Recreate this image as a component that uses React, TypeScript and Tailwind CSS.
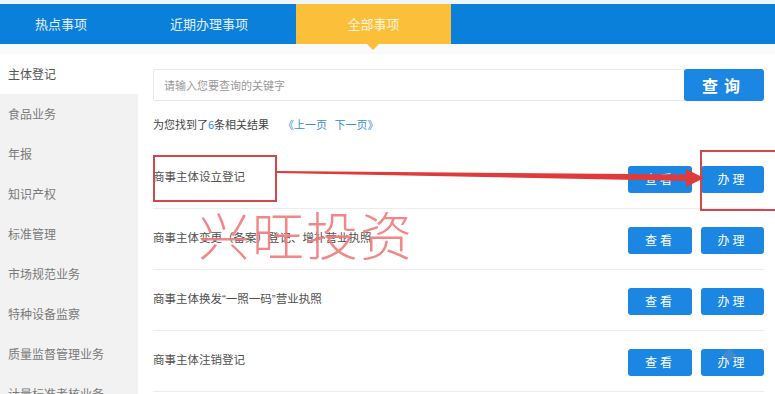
import React from "react";

const sideItems = [
  "主体登记",
  "食品业务",
  "年报",
  "知识产权",
  "标准管理",
  "市场规范业务",
  "特种设备监察",
  "质量监督管理业务",
  "计量标准考核业务",
];

const rows = [
  "商事主体设立登记",
  "商事主体变更（备案）登记、增补营业执照",
  "商事主体换发\u201c一照一码\u201d营业执照",
  "商事主体注销登记",
];

export default function App() {
  return (
    <div
      className="relative w-[775px] h-[394px] overflow-hidden bg-white"
      style={{ fontFamily: '"Noto Sans CJK SC", "Noto Sans", sans-serif' }}
    >
      <div className="h-[4px] bg-[#eef6fb]" />
      {/* Header tabs */}
      <div className="relative flex h-[40px] bg-[#0b80da] text-[13px] text-[#e3f0fc]">
        <div className="flex w-[122px] items-center justify-center">热点事项</div>
        <div className="flex w-[174px] items-center justify-center">近期办理事项</div>
        <div className="relative flex w-[155px] items-center justify-center bg-[#fbbf3a] text-[#fff5dc]">
          全部事项
          <div className="absolute left-[71px] top-[40px] h-0 w-0 border-x-[6px] border-t-[6px] border-x-transparent border-t-[#fbbf3a]" />
        </div>
      </div>
      <div className="h-[10px] bg-[#f8fafb]" />
      <div className="flex">
        {/* Sidebar */}
        <div className="w-[138px] bg-[#f2f2f2] text-[12px] text-[#7a7a7a]">
          {sideItems.map((s, i) => (
            <div
              key={s}
              className={`flex h-[40px] items-center pl-[8px] ${i === 0 ? "bg-white text-[#555]" : ""}`}
            >
              {s}
            </div>
          ))}
        </div>
        {/* Main */}
        <div className="relative flex-1 pl-[15px] pr-[11px] pt-[15px]">
          <div className="flex h-[32px]">
            <div className="flex flex-1 items-center rounded-[2px] border border-[#e8e8e8] pl-[10px] text-[11px] text-[#999]">
              请输入您要查询的关键字
            </div>
            <div className="ml-[-2px] flex w-[80px] items-center justify-center rounded-[3px] bg-[#1b87e3] text-[16px] font-bold tracking-[6px] text-white">
              查询
            </div>
          </div>
          <div className="flex h-[47px] items-center text-[11px] text-[#444]">
            <span>
              为您找到了<span className="text-[#2a8be0]">6</span>条相关结果
            </span>
            <span className="ml-[14px] text-[#3a8fd9]">《上一页&nbsp;&nbsp;&nbsp;下一页》</span>
          </div>
          {rows.map((r) => (
            <div
              key={r}
              className="flex h-[61px] items-center border-b border-[#ececec] text-[11.5px] text-[#505050]"
            >
              <div
                className="flex-1"
                style={{ fontFamily: '"Liberation Sans", "Noto Sans CJK SC", sans-serif' }}
              >
                {r}
              </div>
              <div className="flex gap-[9px] pt-[2px]">
                <div className="flex h-[27px] w-[64px] items-center justify-center rounded-[3px] bg-[#1b87e3] text-[12px] tracking-[3px] text-white">
                  查看
                </div>
                <div className="flex h-[27px] w-[63px] items-center justify-center rounded-[3px] bg-[#1b87e3] text-[12px] tracking-[3px] text-white">
                  办理
                </div>
              </div>
            </div>
          ))}
        </div>
      </div>

      {/* Annotations */}
      <div className="absolute left-[153px] top-[155px] h-[47px] w-[124px] border-2 border-[#d2474c]" />
      <div className="absolute left-[700px] top-[150px] h-[61px] w-[90px] border-2 border-[#d2474c]" />
      <svg className="absolute left-0 top-0" width="775" height="394">
        <polygon points="277,171 690,174.5 690,181 277,173" fill="#e03a3a" />
        <polygon points="686,169 704,178 686,187" fill="#e03a3a" />
      </svg>
      <div
        className="absolute left-[198px] top-[208px] text-[52px] leading-none tracking-[2px] text-[#f27a7a] opacity-90"
        style={{ fontFamily: '"Noto Sans CJK SC", serif', fontWeight: 200 }}
      >
        兴旺投资
      </div>
      <div className="absolute left-[722px] top-[344px] text-[14px] text-[#8a9bb0] opacity-30">
        ◆
      </div>
    </div>
  );
}
